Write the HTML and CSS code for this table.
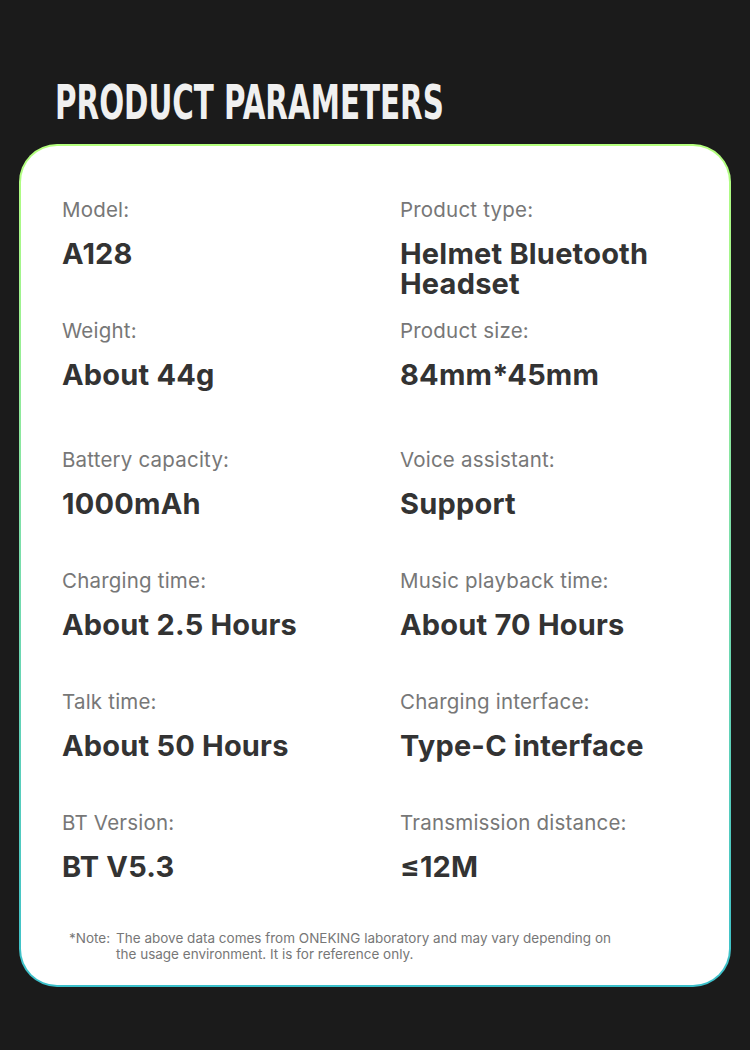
FILE: index.html
```html
<!DOCTYPE html>
<html lang="en">
<head>
<meta charset="utf-8">
<title>Product Parameters</title>
<link rel="stylesheet" href="styles.css">
</head>
<body>
<div class="page">
  <h1 class="title">PRODUCT PARAMETERS</h1>
  <div class="card">
    <div class="card-inner">
      <div class="grid">
        <div class="cell"><div class="label">Model:</div><div class="value">A128</div></div>
        <div class="cell"><div class="label">Product type:</div><div class="value">Helmet Bluetooth Headset</div></div>
        <div class="cell cell-wide"><div class="label">Weight:</div><div class="value">About 44g</div></div>
        <div class="cell cell-wide"><div class="label">Product size:</div><div class="value">84mm*45mm</div></div>
        <div class="cell"><div class="label">Battery capacity:</div><div class="value">1000mAh</div></div>
        <div class="cell"><div class="label">Voice assistant:</div><div class="value">Support</div></div>
        <div class="cell"><div class="label">Charging time:</div><div class="value">About 2.5 Hours</div></div>
        <div class="cell"><div class="label">Music playback time:</div><div class="value">About 70 Hours</div></div>
        <div class="cell"><div class="label">Talk time:</div><div class="value">About 50 Hours</div></div>
        <div class="cell"><div class="label">Charging interface:</div><div class="value">Type-C interface</div></div>
        <div class="cell"><div class="label">BT Version:</div><div class="value">BT V5.3</div></div>
        <div class="cell"><div class="label">Transmission distance:</div><div class="value">≤12M</div></div>
      </div>
      <div class="note">
        <span class="note-key">*Note:</span>
        <span class="note-text">The above data comes from ONEKING laboratory and may vary depending on the usage environment. It is for reference only.</span>
      </div>
    </div>
  </div>
</div>
</body>
</html>
```
FILE: styles.css
```css
html, body {
  margin: 0;
  padding: 0;
  background: #1b1b1b;
}
.page {
  width: 750px;
  height: 1050px;
  overflow: hidden;
  padding-top: 76px;
  box-sizing: border-box;
}
.title {
  margin: 0 0 0 55px;
  font-family: "DejaVu Sans Condensed", "Liberation Sans", sans-serif;
  font-weight: 700;
  font-size: 48px;
  line-height: 52px;
  color: #f0f0f0;
  height: 68px;
  white-space: nowrap;
  transform: scaleX(0.68);
  transform-origin: 0 0;
}
.card {
  margin-left: 19px;
  width: 712px;
  height: 843px;
  box-sizing: border-box;
  padding: 2px;
  border-radius: 38px;
  background: linear-gradient(180deg, #b5ff7e 0%, #7fe0a8 45%, #3bc0cb 100%);
}
.card-inner {
  height: 100%;
  box-sizing: border-box;
  background: #fff;
  border-radius: 36px;
  padding: 50px 20px 0 41px;
}
.grid {
  display: grid;
  grid-template-columns: 338px 1fr;
  row-gap: 21px;
}
.cell {
  height: 100px;
}
.cell-wide {
  height: 108px;
}
.label {
  font-family: Inter, "Open Sans", sans-serif;
  font-size: 20.5px;
  letter-spacing: 0.2px;
  line-height: 28px;
  color: #777;
}
.value {
  margin-top: 15px;
  font-family: Inter, "Open Sans", sans-serif;
  font-weight: 700;
  font-size: 29px;
  letter-spacing: 0.2px;
  line-height: 30px;
  color: #333;
}
.note {
  display: flex;
  gap: 6px;
  margin-left: 7px;
  margin-top: 21px;
  width: 555px;
  font-family: Inter, "Open Sans", sans-serif;
  font-size: 13.5px;
  line-height: 16px;
  color: #777;
}
.note-key {
  flex: none;
}
```
